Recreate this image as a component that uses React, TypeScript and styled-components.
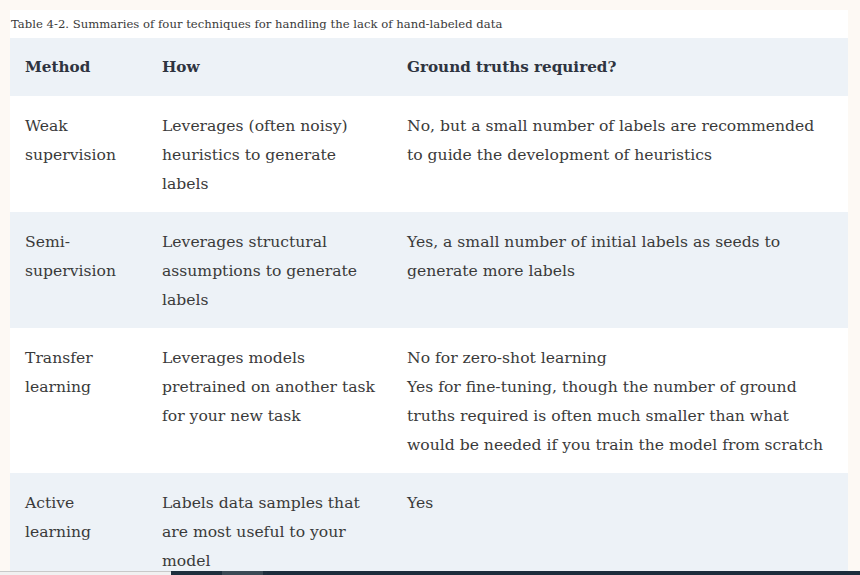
import styled, { createGlobalStyle } from "styled-components";

const GlobalStyle = createGlobalStyle`
  html, body {
    margin: 0;
    padding: 0;
    background: #fdf9f4;
    overflow: hidden;
  }
`;

const Page = styled.div`
  padding: 10px 12px 0 10px;
  font-family: "DejaVu Serif", "Liberation Serif", serif;
  color: #333;
`;

const Figure = styled.div`
  background: #fff;
`;

const Caption = styled.div`
  font-size: 11.65px;
  line-height: 28px;
  padding-left: 1px;
  color: #3a3a3a;
`;

const Table = styled.table`
  width: 100%;
  border-collapse: collapse;
  table-layout: fixed;
  font-size: 15.6px;
`;

const Row = styled.tr<{ shaded?: boolean }>`
  background: ${(p) => (p.shaded ? "#edf2f7" : "#fff")};
`;

const HeadCell = styled.th`
  text-align: left;
  font-weight: 700;
  font-size: 15.2px;
  line-height: 29px;
  padding: 14.5px 15px;
  color: #2f3440;
`;

const Cell = styled.td<{ $padRight?: number }>`
  vertical-align: top;
  line-height: 29px;
  padding: 15.5px ${(p) => p.$padRight ?? 12}px 13.5px 15px;
  color: #3a3a3a;
`;

const BottomBar = styled.div`
  position: fixed;
  left: 0;
  right: 0;
  bottom: 0;
  height: 4px;
  display: flex;
`;

const BarPart = styled.div<{ w?: number; tone: string; edge?: boolean }>`
  flex: ${(p) => (p.w ? `0 0 ${p.w}px` : "1")};
  background: ${(p) => p.tone};
  border-top: ${(p) => (p.edge ? "1px solid #c9c9c9" : "none")};
`;

const rows = [
  {
    method: ["Weak", "supervision"],
    how: "Leverages (often noisy) heuristics to generate labels",
    truth: ["No, but a small number of labels are recommended to guide the development of heuristics"],
  },
  {
    method: ["Semi-", "supervision"],
    how: "Leverages structural assumptions to generate labels",
    truth: ["Yes, a small number of initial labels as seeds to generate more labels"],
  },
  {
    method: ["Transfer", "learning"],
    how: "Leverages models pretrained on another task for your new task",
    truth: [
      "No for zero-shot learning",
      "Yes for fine-tuning, though the number of ground truths required is often much smaller than what would be needed if you train the model from scratch",
    ],
  },
  {
    method: ["Active", "learning"],
    how: "Labels data samples that are most useful to your model",
    truth: ["Yes"],
  },
];

export default function App() {
  return (
    <>
      <GlobalStyle />
      <Page>
        <Figure>
          <Caption>Table 4-2. Summaries of four techniques for handling the lack of hand-labeled data</Caption>
          <Table>
            <colgroup>
              <col style={{ width: 137 }} />
              <col style={{ width: 245 }} />
              <col />
            </colgroup>
            <thead>
              <Row shaded>
                <HeadCell>Method</HeadCell>
                <HeadCell>How</HeadCell>
                <HeadCell>Ground truths required?</HeadCell>
              </Row>
            </thead>
            <tbody>
              {rows.map((r, i) => (
                <Row key={i} shaded={i % 2 === 1}>
                  <Cell>
                    {r.method[0]}
                    <br />
                    {r.method[1]}
                  </Cell>
                  <Cell>{r.how}</Cell>
                  <Cell $padRight={17}>
                    {r.truth.map((t, j) => (
                      <div key={j}>{t}</div>
                    ))}
                  </Cell>
                </Row>
              ))}
            </tbody>
          </Table>
        </Figure>
      </Page>
      <BottomBar>
        <BarPart w={171} tone="#f1f1f1" edge />
        <BarPart w={51} tone="#1e2f3d" />
        <BarPart w={41} tone="#3b4a55" />
        <BarPart w={4} tone="#1e2f3d" />
        <BarPart tone="#1c2d3c" />
      </BottomBar>
    </>
  );
}
